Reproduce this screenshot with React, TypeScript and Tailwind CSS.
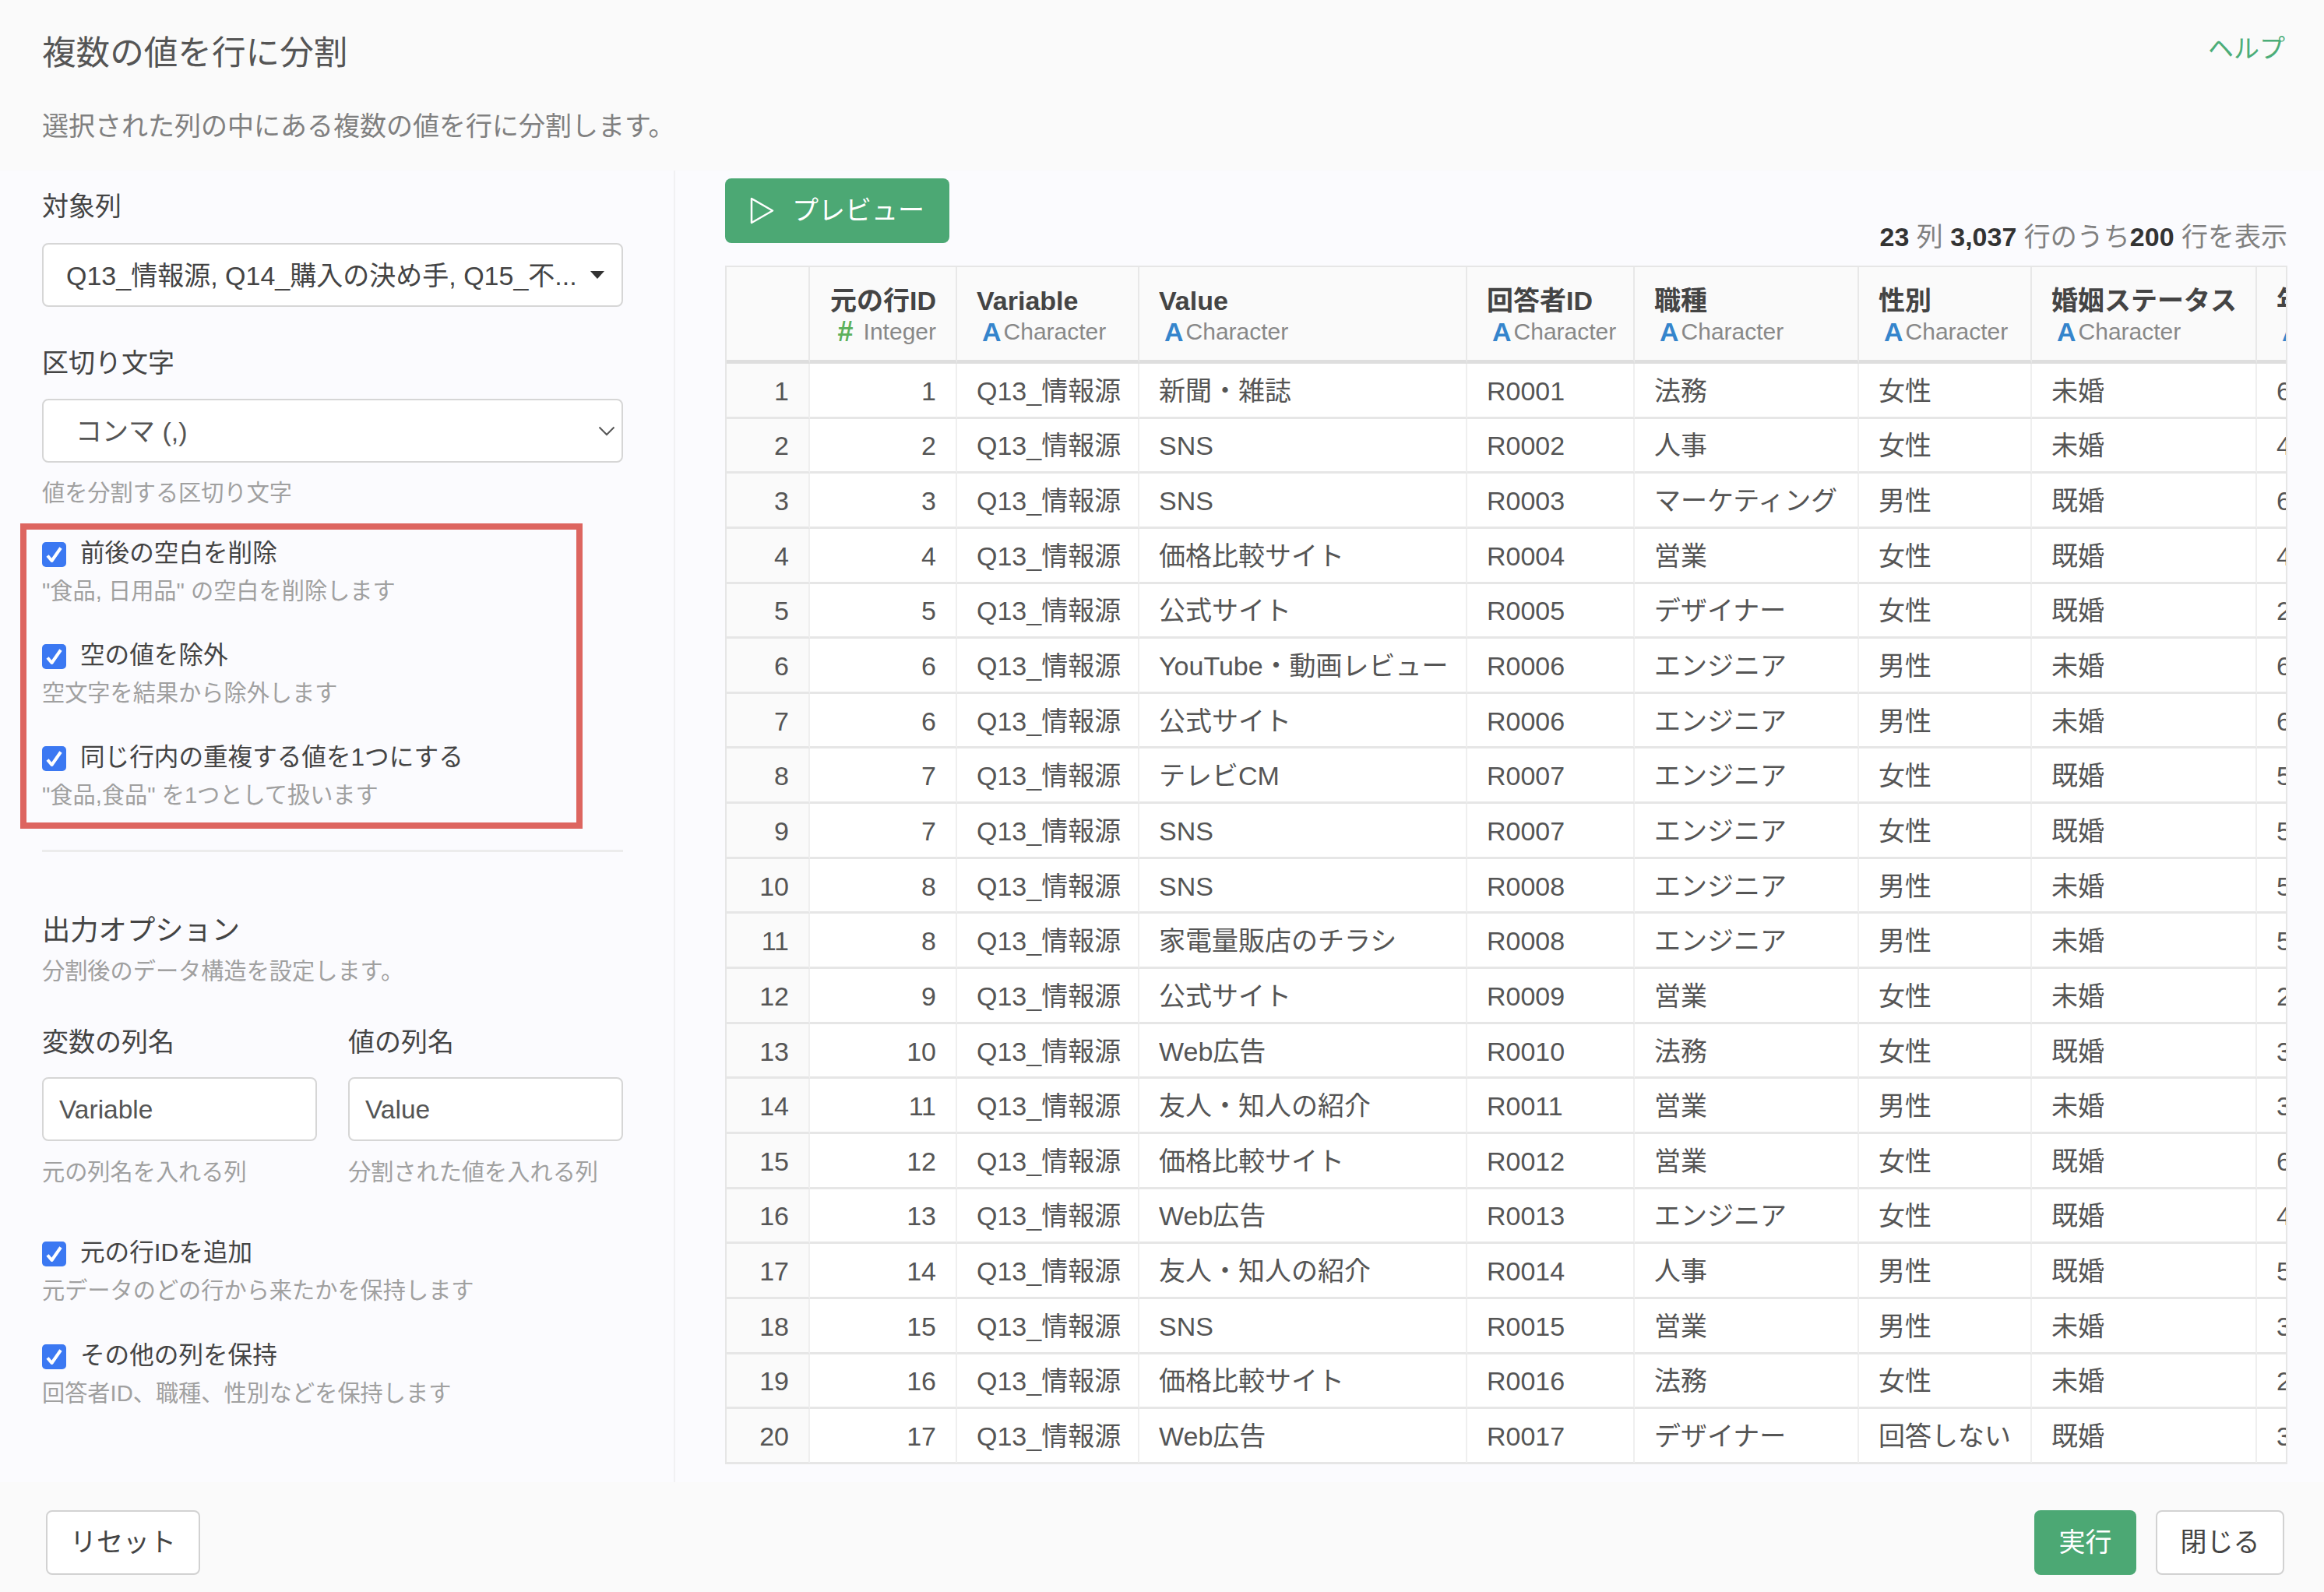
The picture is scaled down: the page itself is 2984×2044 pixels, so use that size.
const rows: [number, string, string, string, string, string, string][] = [
  [1, "新聞・雑誌", "R0001", "法務", "女性", "未婚", "60代"],
  [2, "SNS", "R0002", "人事", "女性", "未婚", "40代"],
  [3, "SNS", "R0003", "マーケティング", "男性", "既婚", "60代"],
  [4, "価格比較サイト", "R0004", "営業", "女性", "既婚", "40代"],
  [5, "公式サイト", "R0005", "デザイナー", "女性", "既婚", "20代"],
  [6, "YouTube・動画レビュー", "R0006", "エンジニア", "男性", "未婚", "60代"],
  [6, "公式サイト", "R0006", "エンジニア", "男性", "未婚", "60代"],
  [7, "テレビCM", "R0007", "エンジニア", "女性", "既婚", "50代"],
  [7, "SNS", "R0007", "エンジニア", "女性", "既婚", "50代"],
  [8, "SNS", "R0008", "エンジニア", "男性", "未婚", "50代"],
  [8, "家電量販店のチラシ", "R0008", "エンジニア", "男性", "未婚", "50代"],
  [9, "公式サイト", "R0009", "営業", "女性", "未婚", "20代"],
  [10, "Web広告", "R0010", "法務", "女性", "既婚", "30代"],
  [11, "友人・知人の紹介", "R0011", "営業", "男性", "未婚", "30代"],
  [12, "価格比較サイト", "R0012", "営業", "女性", "既婚", "60代"],
  [13, "Web広告", "R0013", "エンジニア", "女性", "既婚", "40代"],
  [14, "友人・知人の紹介", "R0014", "人事", "男性", "既婚", "50代"],
  [15, "SNS", "R0015", "営業", "男性", "未婚", "30代"],
  [16, "価格比較サイト", "R0016", "法務", "女性", "未婚", "20代"],
  [17, "Web広告", "R0017", "デザイナー", "回答しない", "既婚", "30代"],
];

const colWidths = [107, 189, 234, 421, 215, 288, 222, 289, 160];
const charHeads = ["Variable", "Value", "回答者ID", "職種", "性別", "婚姻ステータス", "年齢"];

function Check() {
  return (
    <span className="mt-[8px] flex h-[32px] w-[31px] shrink-0 items-center justify-center rounded-[5px] bg-[#3b78f2]">
      <svg width="31" height="32" viewBox="0 0 31 32" fill="none">
        <path d="M7 17.5 L12.5 24 L24 7.5" stroke="white" strokeWidth="4" strokeLinejoin="round" />
      </svg>
    </span>
  );
}

function CheckItem({ label, desc }: { label: string; desc: string }) {
  return (
    <div>
      <label className="flex h-[44px] items-start gap-[18px] text-[31.6px] leading-[44px] text-[#444]">
        <Check />
        <span>{label}</span>
      </label>
      <p className="mt-[7px] text-[29.2px] leading-[40px] text-[#a0a0a0]">{desc}</p>
    </div>
  );
}

function Field({ className, children }: { className?: string; children: React.ReactNode }) {
  return (
    <div className={"flex h-[82px] items-center rounded-[8px] border-2 border-[#d6d6d6] bg-white " + (className ?? "")}>
      {children}
    </div>
  );
}

function Button({ children, primary, className }: { children: React.ReactNode; primary?: boolean; className?: string }) {
  return (
    <button
      className={
        "flex h-[83px] items-center justify-center rounded-[8px] text-[34px] " +
        (primary ? "bg-[#4ca874] text-white " : "border-2 border-[#d2d2d2] bg-white text-[#444] ") +
        (className ?? "")
      }
    >
      {children}
    </button>
  );
}

function TypeA() {
  return <span className="ml-[7px] mr-[3px] text-[34px] font-bold text-[#3585cc]">A</span>;
}

const th = "border-r-2 border-b-[5px] border-r-[#e8e8e8] border-b-[#dedede] bg-[#fafafa] px-[25px] text-left align-top font-normal";
const td = "border-r-2 border-b-[3px] border-r-[#efefef] border-b-[#e6e6e6] bg-white px-[25px] pt-[3px] whitespace-nowrap overflow-hidden";

export default function App() {
  return (
    <div className="flex h-[2044px] w-[2984px] flex-col overflow-hidden bg-[#fafafa] font-['Liberation_Sans','Noto_Sans_CJK_JP',sans-serif] text-[#555]">
      <header className="relative h-[219px] shrink-0 px-[54px] pt-[38px]">
        <div className="flex items-start justify-between">
          <h1 className="text-[43.6px] font-normal leading-[60px] text-[#555]">複数の値を行に分割</h1>
          <a className="mr-[-4px] text-[33px] leading-[50px] text-[#4cad78]">ヘルプ</a>
        </div>
        <p className="mt-[40px] text-[34px] leading-[48px] text-[#808080]">選択された列の中にある複数の値を行に分割します。</p>
      </header>

      <main className="flex h-[1684px] shrink-0 bg-[#fbfbfe]">
        <section className="w-[867px] shrink-0 border-r-2 border-[#f1f1f3] pl-[54px] pr-[65px] pt-[24px]">
          <div className="text-[34px] leading-[44px] text-[#444]">対象列</div>
          <Field className="mt-[25px] pl-[29px] pr-[22px]">
            <span className="min-w-0 flex-1 whitespace-nowrap pt-[2px] text-[34px] text-[#444]">Q13_情報源, Q14_購入の決め手, Q15_不...</span>
            <span className="ml-[4px] h-0 w-0 border-x-[9px] border-t-[10px] border-x-transparent border-t-[#333]" />
          </Field>
          <div className="mt-[50px] text-[34px] leading-[44px] text-[#444]">区切り文字</div>
          <Field className="mt-[24px] justify-between pl-[41px] pr-[8px]">
            <span className="pt-[2px] text-[34px] text-[#555]">コンマ (,)</span>
            <svg width="22" height="13" viewBox="0 0 22 13" fill="none">
              <path d="M1.5 1.5 L11 11 L20.5 1.5" stroke="#555" strokeWidth="2" />
            </svg>
          </Field>
          <p className="mt-[19px] text-[29.2px] leading-[40px] text-[#a0a0a0]">値を分割する区切り文字</p>

          <div className="mt-[19px] ml-[-28px] flex h-[392px] w-[722px] flex-col gap-[40px] border-8 border-[#dd6560] pl-[20px] pt-[8px]">
            <CheckItem label="前後の空白を削除" desc={'"食品, 日用品" の空白を削除します'} />
            <CheckItem label="空の値を除外" desc="空文字を結果から除外します" />
            <CheckItem label="同じ行内の重複する値を1つにする" desc={'"食品,食品" を1つとして扱います'} />
          </div>

          <div className="mt-[27px] h-[3px] bg-[#ececec]" />

          <h2 className="mt-[76px] text-[36.3px] font-normal leading-[50px] text-[#444]">出力オプション</h2>
          <p className="mt-[7px] text-[29.2px] leading-[40px] text-[#a0a0a0]">分割後のデータ構造を設定します。</p>

          <div className="mt-[49px] grid grid-cols-2 gap-x-[40px]">
            <div>
              <div className="text-[34px] leading-[44px] text-[#444]">変数の列名</div>
              <Field className="mt-[23px] pl-[20px]">
                <span className="pt-[2px] text-[33.5px] text-[#555]">Variable</span>
              </Field>
              <p className="mt-[20px] text-[29.2px] leading-[40px] text-[#a0a0a0]">元の列名を入れる列</p>
            </div>
            <div>
              <div className="text-[34px] leading-[44px] text-[#444]">値の列名</div>
              <Field className="mt-[23px] pl-[20px]">
                <span className="pt-[2px] text-[33.5px] text-[#555]">Value</span>
              </Field>
              <p className="mt-[20px] text-[29.2px] leading-[40px] text-[#a0a0a0]">分割された値を入れる列</p>
            </div>
          </div>

          <div className="mt-[61px] flex flex-col gap-[41px]">
            <CheckItem label="元の行IDを追加" desc="元データのどの行から来たかを保持します" />
            <CheckItem label="その他の列を保持" desc="回答者ID、職種、性別などを保持します" />
          </div>
        </section>

        <section className="min-w-0 flex-1 pl-[64px] pr-[47px] pt-[10px]">
          <div className="flex h-[112px] justify-between">
            <Button primary className="w-[288px] gap-[23px]">
              <svg width="31" height="35" viewBox="0 0 31 35" fill="none">
                <path d="M2 2 L29 17.5 L2 33 Z" stroke="white" strokeWidth="2.5" strokeLinejoin="round" />
              </svg>
              <span>プレビュー</span>
            </Button>
            <p className="mb-[15px] self-end text-[34px] leading-[44px] text-[#808080]">
              <b className="text-[#333]">23</b> 列 <b className="text-[#333]">3,037</b> 行のうち<b className="text-[#333]">200</b> 行を表示
            </p>
          </div>

          <div className="h-[1539px] overflow-hidden border-2 border-[#e6e6e6]">
            <table className="table-fixed border-separate border-spacing-0 text-[34px] text-[#555]" style={{ width: colWidths.reduce((a, b) => a + b, 0) }}>
              <colgroup>
                {colWidths.map((w, i) => (
                  <col key={i} style={{ width: w }} />
                ))}
              </colgroup>
              <thead>
                <tr className="h-[124px]">
                  <th className={th} />
                  <th className={th + " !text-right"}>
                    <div className="mt-[20px] text-[34px] font-bold leading-[46px] text-[#444] whitespace-nowrap">元の行ID</div>
                    <div className="mt-[-1px] flex items-center justify-end text-[30px] leading-[36px] text-[#888]">
                      <span className="mr-[13px] text-[36px] font-bold text-[#5cb05c]">#</span>Integer
                    </div>
                  </th>
                  {charHeads.map((h) => (
                    <th key={h} className={th}>
                      <div className="mt-[20px] text-[34px] font-bold leading-[46px] text-[#444] whitespace-nowrap">{h}</div>
                      <div className="mt-[-1px] flex items-center text-[30px] leading-[36px] text-[#888]">
                        <TypeA />
                        Character
                      </div>
                    </th>
                  ))}
                </tr>
              </thead>
              <tbody>
                {rows.map((r, i) => (
                  <tr key={i} className="h-[70.65px]">
                    <td className={td + " !bg-[#fafafa] !pr-[25px] text-right"}>{i + 1}</td>
                    <td className={td + " text-right"}>{r[0]}</td>
                    <td className={td}>Q13_情報源</td>
                    <td className={td}>{r[1]}</td>
                    <td className={td}>{r[2]}</td>
                    <td className={td}>{r[3]}</td>
                    <td className={td}>{r[4]}</td>
                    <td className={td}>{r[5]}</td>
                    <td className={td}>{r[6]}</td>
                  </tr>
                ))}
              </tbody>
            </table>
          </div>
        </section>
      </main>

      <footer className="flex h-[141px] items-start justify-between pl-[59px] pr-[51px] pt-[36px]">
        <Button className="w-[198px]">リセット</Button>
        <div className="flex gap-[25px]">
          <Button primary className="w-[131px]">実行</Button>
          <Button className="w-[165px]">閉じる</Button>
        </div>
      </footer>
    </div>
  );
}
